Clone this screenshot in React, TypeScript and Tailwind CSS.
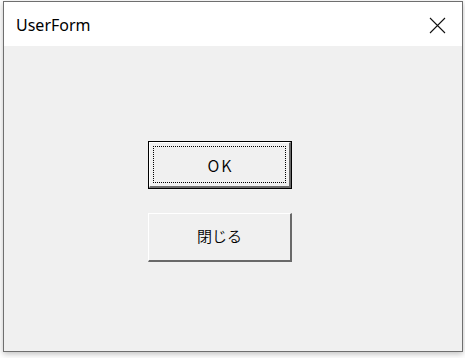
export default function App() {
  return (
    <div className="h-[358px] w-[465px] bg-white pl-[3px] pt-[1px]">
      <div className="flex h-[351px] w-[460px] flex-col border border-[#6f6f6f] bg-[#f0f0f0] shadow-[0_2px_6px_rgba(0,0,0,0.25)]">
        <div className="flex h-[44px] items-center justify-between bg-white pl-[12px] pr-[16px]">
          <span className="pt-[2px] text-[16px] text-black [font-family:'Noto_Sans','Open_Sans',sans-serif]">UserForm</span>
          <svg width="17" height="17" viewBox="0 0 17 17" className="mt-[2px]">
            <path d="M1 1 L16 16 M16 1 L1 16" stroke="#111" strokeWidth="1.1" />
          </svg>
        </div>
        <div className="flex flex-col gap-[24px] pl-[144px] pt-[95px]">
          <button className="h-[48px] w-[144px] border border-black bg-[#f0f0f0] p-0">
            <div className="flex h-full w-full border-b-2 border-r-2 border-l border-t border-b-[#696969] border-r-[#696969] border-l-white border-t-white p-[3px]">
              <div className="flex flex-1 items-center justify-center border border-dotted border-black pt-[1px] text-[16px] font-[350] tracking-[2px] text-black [font-family:'Noto_Sans_CJK_JP',sans-serif]">
                <span className="pl-[2px]">OK</span>
              </div>
            </div>
          </button>
          <button className="h-[49px] w-[144px] border-b-2 border-r-2 border-l border-t border-b-[#696969] border-r-[#696969] border-l-white border-t-white bg-[#f0f0f0] p-0">
            <div className="flex h-full w-full items-center justify-center pb-[2px] text-[15px] font-[350] text-black [font-family:'Noto_Sans_CJK_JP',sans-serif]">
              閉じる
            </div>
          </button>
        </div>
      </div>
    </div>
  )
}
